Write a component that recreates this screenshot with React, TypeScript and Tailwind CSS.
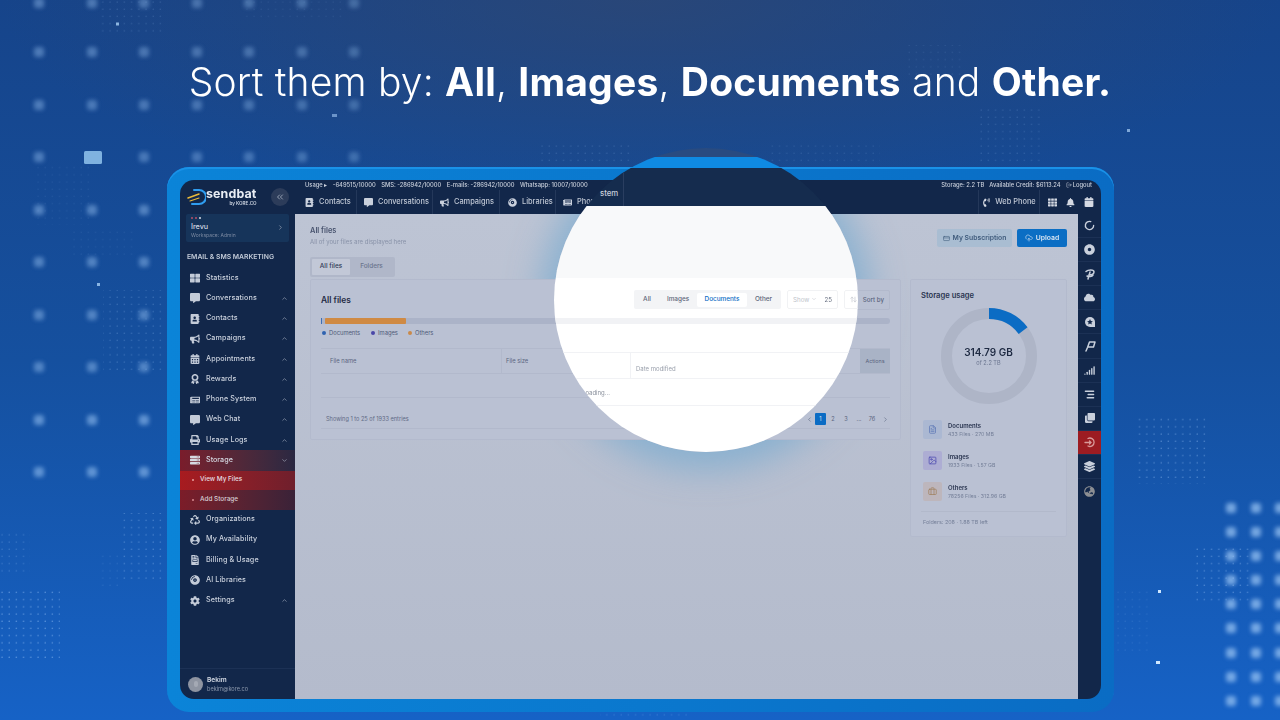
import React from 'react';
import { ChevronUp, ChevronDown, ChevronRight, ChevronLeft, ChevronsLeft, LogOut, CreditCard, CloudUpload, FileText, Image, Briefcase, ArrowUpDown, LoaderCircle, Signal, AlignRight } from 'lucide-react';
import {
  FaThLarge, FaCommentAlt, FaAddressBook, FaBullhorn, FaCalendarAlt, FaAward, FaNewspaper, FaPrint, FaServer,
  FaRecycle, FaUserCircle, FaFileInvoice, FaCompactDisc, FaCog, FaPhoneVolume, FaTh, FaBell, FaCalendar, FaCloud, FaClone, FaLayerGroup, FaGlobeAsia, FaDotCircle,
} from 'react-icons/fa';

const font = "font-['Inter','Noto_Sans',sans-serif]";

const bigDots: [number, number, number][] = [];
[39, 92, 144, 197, 249, 302, 354].forEach((x, i) => {
  [3, 52, 105, 157].forEach((y) => {
    if (!(x === 92 && y === 157)) bigDots.push([x, y, 0.42 - i * 0.02]);
  });
});
[39, 92, 144].forEach((x) => {
  [210, 262, 315, 367, 420, 472].forEach((y) => bigDots.push([x, y, y > 400 ? 0.55 : 0.45]));
});
[1231, 1256, 1280].forEach((x) => {
  [508, 532, 556, 580, 604, 628, 653, 677, 701].forEach((y) => bigDots.push([x, y, 0.7]));
});

const patches = [
  { x: 100, y: 0, w: 65, h: 34, o: 0.2 },
  { x: 245, y: 0, w: 100, h: 18, o: 0.1 },
  { x: 32, y: 165, w: 60, h: 60, o: 0.1 },
  { x: 70, y: 230, w: 65, h: 25, o: 0.1 },
  { x: 103, y: 290, w: 62, h: 85, o: 0.28 },
  { x: 122, y: 513, w: 44, h: 70, o: 0.4 },
  { x: 100, y: 550, w: 22, h: 36, o: 0.15 },
  { x: 0, y: 590, w: 60, h: 70, o: 0.55 },
  { x: 0, y: 530, w: 30, h: 46, o: 0.28 },
  { x: 905, y: 45, w: 60, h: 32, o: 0.12 },
  { x: 980, y: 105, w: 60, h: 60, o: 0.2 },
  { x: 1138, y: 416, w: 68, h: 68, o: 0.45 },
  { x: 1193, y: 545, w: 58, h: 58, o: 0.45 },
  { x: 1115, y: 590, w: 36, h: 62, o: 0.15 },
  { x: 540, y: 140, w: 90, h: 24, o: 0.2 },
  { x: 770, y: 142, w: 110, h: 22, o: 0.15 },
  { x: 600, y: 702, w: 90, h: 18, o: 0.22 },
];

function Backdrop() {
  return (
    <svg className="absolute inset-0" width="1280" height="720" aria-hidden="true">
      <defs>
        <pattern id="a" width="7.2" height="7.2" patternUnits="userSpaceOnUse">
          <circle cx="2" cy="2" r="0.7" fill="#a9d0ff" />
        </pattern>
        <filter id="b" x="-100%" y="-100%" width="300%" height="300%">
          <feGaussianBlur stdDeviation="2" />
        </filter>
        <radialGradient id="g" cx="0.5" cy="0" r="0.5">
          <stop offset="0" stopColor="#33486f" stopOpacity="0.65" />
          <stop offset="1" stopColor="#33486f" stopOpacity="0" />
        </radialGradient>
      </defs>
      <rect x="0" y="0" width="1280" height="420" fill="url(#g)" />
      {patches.map((p, i) => (
        <rect key={i} x={p.x} y={p.y} width={p.w} height={p.h} fill="url(#a)" opacity={p.o} />
      ))}
      <g filter="url(#b)">
        {bigDots.map(([x, y, o], i) => (
          <rect key={i} x={x - 5} y={y - 5} width="10" height="10" rx="3" fill="#9cc6f5" opacity={o} />
        ))}
      </g>
      <rect x="84" y="151" width="18" height="13" rx="1.5" fill="#7fb2e0" />
      <rect x="116" y="22.5" width="3" height="3" fill="#a8d0f5" opacity="0.8" />
      <rect x="332" y="114" width="5" height="3" fill="#7fa8d8" opacity="0.8" />
      <rect x="97" y="283" width="3" height="3" fill="#a8d0f5" opacity="0.8" />
      <rect x="1158" y="590" width="3" height="3" fill="#cfe8ff" />
      <rect x="1156" y="661" width="4" height="3" fill="#cfe8ff" />
      <rect x="1127" y="129" width="3" height="3" fill="#7fa8d8" />
      <rect x="719" y="161" width="3" height="3" fill="#cfe8ff" />
    </svg>
  );
}

function Logo() {
  return (
    <div className="flex items-center">
      <svg width="19" height="20" viewBox="0 0 19 20" fill="none" aria-hidden="true">
        <path d="M7 3h5a7 7 0 0 1 0 14H5" stroke="#2f9df0" strokeWidth="2" strokeLinecap="round" />
        <path d="M1 11l11-4" stroke="#e8b93a" strokeWidth="1.5" strokeLinecap="round" />
        <path d="M3 14l9-3" stroke="#e8b93a" strokeWidth="1.1" strokeLinecap="round" />
      </svg>
      <div className="flex flex-col items-end">
        <span className="text-[12.4px] leading-[12px] font-bold tracking-[0.15px] text-[#e8edf4]">sendbat</span>
        <span className="mt-[1px] text-[4.6px] leading-[5px] font-semibold text-[#cfd6e2]">by KORE.CO</span>
      </div>
    </div>
  );
}

type NavRow = { icon: React.ElementType; label: string; chev?: boolean };

const navTop: NavRow[] = [
  { icon: FaThLarge, label: 'Statistics' },
  { icon: FaCommentAlt, label: 'Conversations', chev: true },
  { icon: FaAddressBook, label: 'Contacts', chev: true },
  { icon: FaBullhorn, label: 'Campaigns', chev: true },
  { icon: FaCalendarAlt, label: 'Appointments', chev: true },
  { icon: FaAward, label: 'Rewards', chev: true },
  { icon: FaNewspaper, label: 'Phone System', chev: true },
  { icon: FaCommentAlt, label: 'Web Chat', chev: true },
  { icon: FaPrint, label: 'Usage Logs', chev: true },
];
const navBottom: NavRow[] = [
  { icon: FaRecycle, label: 'Organizations' },
  { icon: FaUserCircle, label: 'My Availability' },
  { icon: FaFileInvoice, label: 'Billing & Usage' },
  { icon: FaCompactDisc, label: 'AI Libraries' },
  { icon: FaCog, label: 'Settings', chev: true },
];

function Item({ row }: { row: NavRow }) {
  const I = row.icon;
  return (
    <div className="flex items-center h-[20.25px] pl-[10px] pr-[7px]">
      <I size={10} className="text-[#c3cbd8] shrink-0" />
      <span className="ml-[6px] text-[7.2px] font-medium tracking-[0.1px] text-[#c9d0dc] flex-1">{row.label}</span>
      {row.chev && <ChevronUp size={7} strokeWidth={2} className="text-[#aab4c4]" />}
    </div>
  );
}

function Sidebar() {
  return (
    <aside className="w-[115px] shrink-0 flex flex-col bg-[#12274a]">
      <div className="h-[34px] flex items-center justify-between pl-[7px] pr-[6px]">
        <Logo />
        <div className="w-[18px] h-[18px] rounded-full bg-[#2c3c5a] flex items-center justify-center">
          <ChevronsLeft size={10} className="text-[#a9b3c4]" />
        </div>
      </div>
      <div className="mx-[6px] h-[28px] rounded-[2px] bg-[#16345a] px-[5px] pt-[2px]">
        <div className="flex gap-[2px] h-[4px] items-center">
          <span className="w-[2px] h-[2px] rounded-full bg-[#b9506a]" />
          <span className="w-[2px] h-[2px] rounded-full bg-[#b9506a]" />
          <span className="w-[2px] h-[2px] rounded-full bg-[#d8dde6]" />
        </div>
        <div className="flex items-center justify-between mt-[2px]">
          <span className="text-[7.2px] leading-[10px] font-medium text-[#d3d9e3]">Irevu</span>
          <ChevronRight size={7} className="text-[#aab4c4]" />
        </div>
        <div className="text-[5px] leading-[7px] text-[#7c8aa2]">Workspace: Admin</div>
      </div>
      <div className="pl-[7px] mt-[9px] h-[16px] text-[6.8px] leading-[12px] font-semibold text-[#c3cbd8]">EMAIL &amp; SMS MARKETING</div>
      <div className="mt-[1px] flex flex-col">
        {navTop.map((r) => <Item key={r.label} row={r} />)}
        <div className="flex items-center h-[20.25px] pl-[10px] pr-[7px] bg-gradient-to-r from-[#7a1c2b] to-[#2a2842]">
          <FaServer size={10} className="text-[#d5d9e2] shrink-0" />
          <span className="ml-[6px] text-[7.2px] font-medium text-[#d5d9e2] flex-1">Storage</span>
          <ChevronDown size={7} className="text-[#aab4c4]" />
        </div>
        <div className="flex items-center h-[19.5px] pl-[12px] bg-gradient-to-r from-[#a81b1f] to-[#6f1f2c]">
          <span className="w-[2px] h-[2px] rounded-full bg-[#e8a0a0]" />
          <span className="ml-[6px] text-[6.4px] font-medium text-[#e6dfe2]">View My Files</span>
        </div>
        <div className="flex items-center h-[19.5px] pl-[12px] bg-gradient-to-r from-[#7c1c28] to-[#3a2238]">
          <span className="w-[2px] h-[2px] rounded-full bg-[#d88a90]" />
          <span className="ml-[6px] text-[6.4px] font-medium text-[#d8d0d6]">Add Storage</span>
        </div>
        {navBottom.map((r) => <Item key={r.label} row={r} />)}
      </div>
      <div className="mt-auto h-[31px] border-t border-[#1c3155] flex items-center pl-[8px] gap-[4px]">
        <div className="w-[15px] h-[15px] rounded-full bg-[#8e94a1] flex items-center justify-center">
          <span className="w-[4px] h-[6px] rounded-full bg-[#a4a9b4]" />
        </div>
        <div className="flex flex-col">
          <span className="text-[6.6px] leading-[9px] font-semibold text-[#d3d9e3]">Bekim</span>
          <span className="text-[5.6px] leading-[8px] text-[#8d99ad]">bekim@kore.co</span>
        </div>
      </div>
    </aside>
  );
}

const tops: [React.ElementType, string, string][] = [
  [FaAddressBook, 'Contacts', 'w-[62px] pl-[10px]'],
  [FaCommentAlt, 'Conversations', 'w-[76px] pl-[7px]'],
  [FaBullhorn, 'Campaigns', 'w-[67px] pl-[7px]'],
  [FaCompactDisc, 'Libraries', 'w-[56px] pl-[8px]'],
  [FaNewspaper, 'Phone System', 'w-[67px] pl-[7px]'],
];

function TopBar() {
  return (
    <header className="h-[34px] shrink-0 bg-[#12274a] flex flex-col">
      <div className="h-[10px] flex items-center justify-between pl-[10px] pr-[9px] text-[5.8px] font-medium text-[#c9d0dc]">
        <div className="flex gap-[5.5px]">
          <span>Usage ▸</span>
          <span>-649515/10000</span>
          <span>SMS: -286942/10000</span>
          <span>E-mails: -286942/10000</span>
          <span>Whatsapp: 10007/10000</span>
        </div>
        <div className="flex gap-[5px] items-center">
          <span>Storage: 2.2 TB</span>
          <span>Available Credit: $6113.24</span>
          <span className="flex items-center gap-[1px]"><LogOut size={6} />Logout</span>
        </div>
      </div>
      <div className="h-[24px] flex items-stretch">
        {tops.map(([I, t, c]) => (
          <div key={t} className={`${c} shrink-0 flex items-center gap-[5px] border-r border-[#24385a] overflow-hidden whitespace-nowrap`}>
            <I size={9} className="text-[#c9d0dc] shrink-0" />
            <span className="text-[7.4px] font-medium text-[#c0c8d5]">{t}</span>
          </div>
        ))}
        <div className="flex-1" />
        <div className="w-[62px] flex items-center justify-center gap-[4px] border-l border-r border-[#24385a]">
          <FaPhoneVolume size={9} className="text-[#d5dae3]" />
          <span className="text-[7.4px] font-medium text-[#c0c8d5]">Web Phone</span>
        </div>
        <div className="w-[61px] flex items-center justify-between pl-[8px] pr-[7px]">
          <FaTh size={9} className="text-[#d5dae3]" />
          <FaBell size={9} className="text-[#d5dae3]" />
          <FaCalendar size={10} className="text-[#d5dae3]" />
        </div>
      </div>
    </header>
  );
}

function Swirl() {
  return (
    <svg width="12" height="12" viewBox="0 0 12 12" fill="none" stroke="#c9d0dc" strokeWidth="1.5" strokeLinecap="round" aria-hidden="true">
      <path d="M2 3.5C4 1.5 10 1 10 4c0 2.5-3.5 3-5 2.5M6 4 4 11M3 8c2 1 5 .5 6-1" />
    </svg>
  );
}
function StarDisc() {
  return (
    <svg width="12" height="12" viewBox="0 0 12 12" aria-hidden="true">
      <path d="M6 1a5 5 0 1 0 0 10h5V6a5 5 0 0 0-5-5Z" fill="#c9d0dc" />
      <path d="m6 3 .9 1.9 2 .3-1.5 1.4.4 2L6 7.6l-1.8 1 .4-2-1.5-1.4 2-.3Z" fill="#12274a" />
    </svg>
  );
}
function PShape() {
  return (
    <svg width="12" height="12" viewBox="0 0 12 12" fill="none" stroke="#c9d0dc" strokeWidth="1.5" strokeLinecap="round" strokeLinejoin="round" aria-hidden="true">
      <path d="M2 11l1.5-3.5L5.5 2H11L9.5 7H4" />
    </svg>
  );
}
function RedGlyph() {
  return (
    <svg width="12" height="12" viewBox="0 0 12 12" fill="none" stroke="#d99a9a" strokeWidth="1.3" strokeLinecap="round" aria-hidden="true">
      <path d="M4 2.5a4.2 4.2 0 1 1 0 7.5M1 6.5h6M5.5 5l1.5 1.5L5.5 8" />
    </svg>
  );
}

const base = 'text-[#c9d0dc]';
const rail: React.ReactNode[] = [
  <LoaderCircle size={11} strokeWidth={3} className="text-[#c9d0dc]" />,
  <FaDotCircle size={11} className={base} />,
  <Swirl />,
  <FaCloud size={11} className={base} />,
  <StarDisc />,
  <PShape />,
  <Signal size={11} strokeWidth={3} className={base} />,
  <AlignRight size={11} strokeWidth={3} className={base} />,
  <FaClone size={10} className={base} />,
  <RedGlyph />,
  <FaLayerGroup size={11} className={base} />,
  <FaGlobeAsia size={11} className="text-[#8d8f93]" />,
];

function Rail() {
  return (
    <div className="w-[23px] shrink-0 bg-[#12274a] flex flex-col">
      {rail.map((n, i) => (
        <div key={i} className={`h-[24.1px] flex items-center justify-center ${i < 11 ? 'border-b border-[#1c3155]' : ''} ${i === 9 ? 'bg-[#9c1c22]' : ''}`}>
          {n}
        </div>
      ))}
    </div>
  );
}

function Donut() {
  const r = 42.5;
  const c = 2 * Math.PI * r;
  return (
    <div className="relative w-[96px] h-[96px] mx-auto">
      <svg width="96" height="96" viewBox="0 0 96 96" aria-hidden="true">
        <circle cx="48" cy="48" r={r} fill="none" stroke="#aeb5c7" strokeWidth="11" />
        <circle cx="48" cy="48" r={r} fill="none" stroke="#0b6cc4" strokeWidth="11" strokeDasharray={`${c * 0.148} ${c}`} transform="rotate(-90 48 48)" />
      </svg>
      <div className="absolute inset-0 flex flex-col items-center justify-center">
        <span className="text-[10px] leading-[13px] font-semibold text-[#1e2a42]">314.79 GB</span>
        <span className="text-[5.6px] leading-[8px] text-[#6b7690]">of 2.2 TB</span>
      </div>
    </div>
  );
}

function StoreRow({ icon: I, bg, color, title, sub }: { icon: React.ElementType; bg: string; color: string; title: string; sub: string }) {
  return (
    <div className="flex items-center gap-[6px] h-[20px]">
      <div className={`w-[19px] h-[19px] rounded-[2px] ${bg} flex items-center justify-center`}>
        <I size={9} className={color} />
      </div>
      <div className="flex flex-col">
        <span className="text-[6px] leading-[9px] font-semibold text-[#2a3550]">{title}</span>
        <span className="text-[5.2px] leading-[8px] text-[#747f98]">{sub}</span>
      </div>
    </div>
  );
}

function StorageCard() {
  return (
    <section className="w-[157px] h-[258px] rounded-[2px] bg-[#bac1d3] border border-[#b3bacd] px-[10px]">
      <div className="mt-[10px] text-[7.6px] leading-[11px] font-semibold text-[#2a3550]">Storage usage</div>
      <div className="mt-[7px]"><Donut /></div>
      <div className="mt-[15px] flex flex-col gap-[11px] pl-[2px]">
        <StoreRow icon={FileText} bg="bg-[#abb8d2]" color="text-[#5d78b5]" title="Documents" sub="433 Files · 270 MB" />
        <StoreRow icon={Image} bg="bg-[#adadd3]" color="text-[#4d4bb0]" title="Images" sub="1933 Files · 1.57 GB" />
        <StoreRow icon={Briefcase} bg="bg-[#bdb6bc]" color="text-[#a08260]" title="Others" sub="78256 Files · 312.96 GB" />
      </div>
      <div className="mt-[10px] pt-[6px] pl-[2px] border-t border-[#b2b9cb] text-[5.4px] leading-[8px] text-[#747f98]">Folders: 208 · 1.88 TB left</div>
    </section>
  );
}

function FilesCard() {
  return (
    <section className="w-[591px] h-[161px] rounded-[2px] bg-[#bac1d3] border border-[#b3bacd] px-[10px] flex flex-col">
      <div className="h-[20px] mt-[10px] flex items-center justify-between">
        <span className="text-[8.4px] font-semibold text-[#1f2a44]">All files</span>
        <div className="w-[45px] h-[20px] rounded-[2px] border border-[#b2b9cc] flex items-center justify-end pr-[5px] text-[6.2px] font-medium text-[#5a6580]">Sort by</div>
      </div>
      <div className="mt-[8px] h-[6px] rounded-full bg-[#abb3c8] flex items-stretch">
        <span className="w-[1px] bg-[#3f6fb5]" />
        <span className="w-[3px]" />
        <span className="w-[81px] rounded-[1px] bg-[#cf8a44]" />
      </div>
      <div className="mt-[5px] h-[8px] flex items-center text-[5.8px] text-[#4f5b78]">
        <span className="w-[4px] h-[4px] rounded-full bg-[#2f62b0] ml-[1px]" />
        <span className="ml-[3px] w-[42px]">Documents</span>
        <span className="w-[4px] h-[4px] rounded-full bg-[#4a47a8]" />
        <span className="ml-[3px] w-[30px]">Images</span>
        <span className="w-[4px] h-[4px] rounded-full bg-[#c9894a]" />
        <span className="ml-[3px]">Others</span>
      </div>
      <div className="relative mt-[11px] border-t border-[#b2b9cc] h-[25px] flex items-center text-[5.8px] text-[#5a6580]">
        <div className="w-[181px] h-full border-r border-[#b2b9cc] pl-[9px] flex items-center">File name</div>
        <div className="w-[129px] h-full border-r border-[#b2b9cc] pl-[4px] flex items-center">File size</div>
        <div className="absolute right-0 top-0 w-[30px] h-full bg-[#a9b3c6] flex items-center justify-center text-[5.4px]">Actions</div>
      </div>
      <div className="h-[24px] border-t border-[#b2b9cc]" />
      <div className="h-[32px] border-t border-b border-[#b2b9cc] flex items-start justify-between pl-[5px] pr-[1px] pt-[15px]">
        <span className="text-[5.6px] leading-[12px] text-[#5f6a85]">Showing 1 to 25 of 1933 entries</span>
        <div className="flex items-center gap-[1px] h-[12px] text-[5.6px] text-[#5a6580]">
          <ChevronLeft size={7} />
          <span className="w-[11px] h-[12px] ml-[1px] rounded-[1px] bg-[#0b6cc4] text-[#dfe8f4] flex items-center justify-center">1</span>
          <span className="w-[12px] text-center">2</span>
          <span className="w-[12px] text-center">3</span>
          <span className="w-[12px] text-center">...</span>
          <span className="w-[12px] text-center">76</span>
          <ChevronRight size={7} className="ml-[3px]" />
        </div>
      </div>
    </section>
  );
}

function Main() {
  return (
    <main className="relative flex-1 overflow-hidden bg-gradient-to-b from-[#bdc4d4] to-[#b4bbcc] pl-[15px] pr-[11px] flex flex-col">
      <div className="absolute left-[259px] top-[-66px] w-[304px] h-[304px] rounded-full shadow-[0_4px_34px_14px_rgba(125,172,208,0.8)]" />
      <div className="relative flex items-start justify-between h-[43px] pt-[12px]">
        <div className="flex flex-col">
          <span className="text-[7.4px] leading-[10px] font-semibold text-[#48536e]">All files</span>
          <span className="mt-[2px] text-[6px] leading-[8px] text-[#8892a8]">All of your files are displayed here</span>
        </div>
        <div className="flex gap-[5px] mt-[3px]">
          <div className="w-[75px] h-[18px] rounded-[2px] bg-[#a9bdd2] flex items-center justify-center gap-[3px]">
            <CreditCard size={7} className="text-[#44607f]" />
            <span className="text-[6.8px] font-semibold text-[#3f5b7c]">My Subscription</span>
          </div>
          <div className="w-[50px] h-[18px] rounded-[2px] bg-[#0b6ec4] flex items-center justify-center gap-[3px]">
            <CloudUpload size={8} className="text-[#cfe0f2]" />
            <span className="text-[6.8px] font-semibold text-[#dbe7f4]">Upload</span>
          </div>
        </div>
      </div>
      <div className="relative w-[85px] h-[20px] rounded-[2px] bg-[#b0b7c9] p-[2px] flex items-stretch text-[6.4px] font-medium">
        <div className="w-[38px] rounded-[1px] bg-[#c2c8d7] flex items-center justify-center text-[#2f3a55]">All files</div>
        <div className="flex-1 flex items-center justify-center text-[#6a748d]">Folders</div>
      </div>
      <div className="relative mt-[2px] flex gap-[9px] items-start">
        <FilesCard />
        <StorageCard />
      </div>
    </main>
  );
}

function Lens() {
  return (
    <div className="absolute left-[554px] top-[148px] w-[304px] h-[304px] rounded-full overflow-hidden flex flex-col">
      <div className="h-[9px] shrink-0 bg-[#294b80]" />
      <div className="h-[11px] shrink-0 bg-[#0f8ae2]" />
      <div className="h-[38px] shrink-0 bg-[#152c4e] flex items-start">
        <div className="w-[46px] shrink-0" />
        <span className="mt-[20px] text-[7.8px] leading-[10px] font-medium text-[#c9d0dc]">stem</span>
        <div className="ml-[5px] h-full border-r border-[#2a3e60]" />
      </div>
      <div className="h-[72px] shrink-0 bg-[#f8f9fa]" />
      <div className="flex-1 bg-white flex flex-col">
        <div className="mt-[12px] h-[19px] pl-[80px] flex items-stretch gap-[6px]">
          <div className="w-[147px] shrink-0 rounded-[2px] bg-[#f3f4f6] flex items-center text-[6.4px] font-medium text-[#5b6478] p-[1px]">
            <span className="w-[24px] text-center">All</span>
            <span className="w-[38px] text-center">Images</span>
            <span className="w-[50px] h-[14px] rounded-[2px] bg-white text-[#0b6cc4] flex items-center justify-center">Documents</span>
            <span className="flex-1 text-center">Other</span>
          </div>
          <div className="w-[51px] shrink-0 rounded-[2px] border border-[#f1f2f4] flex items-center justify-between px-[5px] text-[6.2px] text-[#c0c4cc]">
            <span className="flex items-center gap-[2px]">Show <ChevronDown size={6} /></span>
            <span className="text-[#6a7283]">25</span>
          </div>
          <div className="w-[44px] shrink-0 rounded-[2px] border border-[#f1f2f4] flex items-center pl-[5px]">
            <ArrowUpDown size={7} className="text-[#b8bcc4]" />
          </div>
        </div>
        <div className="mt-[9px] h-[6px] shrink-0 bg-[#f1f2f5]" />
        <div className="mt-[28px] h-[27px] border-t border-b border-[#f1f2f5] flex">
          <div className="w-[77px] shrink-0 border-r border-[#f1f2f5]" />
          <div className="pl-[5px] pt-[5px] text-[6px] flex items-center text-[#9aa0ac]">Date modified</div>
        </div>
        <div className="h-[27px] border-b border-[#f1f2f5] flex items-center pl-[28px] text-[6px] text-[#8a909c]">Loading...</div>
      </div>
    </div>
  );
}

export default function App() {
  return (
    <div className={`${font} relative w-[1280px] h-[720px] overflow-hidden bg-gradient-to-b from-[#16448a] via-[#15509f] to-[#1662c6]`}>
      <Backdrop />
      <div className="relative h-[167px] flex items-center justify-center pb-[3px] pl-[20px]">
        <h1 className="text-[39px] leading-[44px] font-light tracking-[0.2px] text-white whitespace-nowrap">
          Sort them by: <b className="font-bold">All</b>, <b className="font-bold">Images</b>, <b className="font-bold">Documents</b> and <b className="font-bold">Other.</b>
        </h1>
      </div>
      <div className="relative ml-[167px] w-[947px] h-[545px] rounded-[22px] p-[13px] bg-gradient-to-r from-[#0b84d8] to-[#0a6cc4] shadow-[inset_0_2px_0_#1a92e8]">
        <div className="w-full h-full rounded-[14px] overflow-hidden flex blur-[0.45px]">
          <Sidebar />
          <div className="flex-1 flex flex-col min-w-0">
            <TopBar />
            <div className="flex-1 flex min-h-0">
              <Main />
              <Rail />
            </div>
          </div>
        </div>
      </div>
      <Lens />
    </div>
  );
}
